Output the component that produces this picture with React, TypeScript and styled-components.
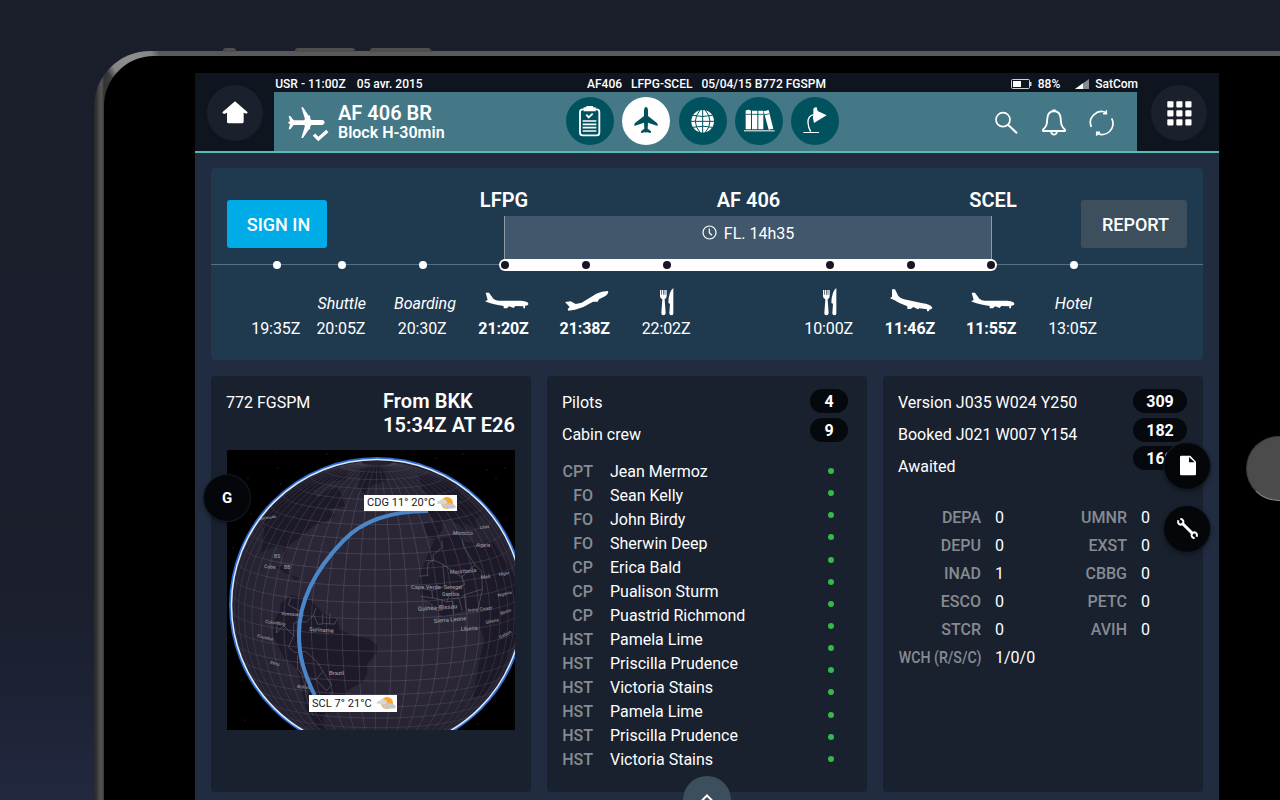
import React from "react";
import styled, { createGlobalStyle, css } from "styled-components";

const GlobalStyle = createGlobalStyle`
  * { box-sizing: border-box; }
  body { margin: 0; overflow: hidden; background: #1a1e2b; }
  h1, h2, p { margin: 0; font-weight: inherit; font-size: inherit; }
`;

/* ---------- device ---------- */

const Backdrop = styled.div`
  width: 1280px;
  height: 800px;
  overflow: hidden;
  position: relative;
  padding: 51px 0 0 94px;
  font-family: Roboto, "Liberation Sans", sans-serif;
  font-size: 16px;
  color: #fff;
  background: linear-gradient(180deg, #1a1e2b 0%, #1b1f2d 74%, #1c2133 84%, #22283f 100%);
`;

const Tablet = styled.div`
  position: relative;
  width: 1300px;
  height: 1000px;
  border-radius: 56px 0 0 0;
  padding: 5px 0 0 10px;
  background:
    radial-gradient(circle at 38px 8px, #8f8f8f 0, #858585 20px, transparent 28px),
    linear-gradient(90deg, #29292b 0, #343436 3px, #4a4a4a 5px, #525252 8px, #333 10px, #5a5a5a 40px);
`;

const Bezel = styled.div`
  width: 1290px;
  height: 995px;
  border-radius: 50px 0 0 0;
  padding: 17px 0 0 91px;
  background: #000;
`;

const SideButton = styled.i<{ $left: number; $width: number }>`
  position: absolute;
  top: -3px;
  left: ${(p) => p.$left}px;
  width: ${(p) => p.$width}px;
  height: 4px;
  border-radius: 3px 3px 0 0;
  background: #4e4e4f;
`;

const HomeKey = styled.i`
  position: absolute;
  left: 1152px;
  top: 385px;
  width: 65px;
  height: 65px;
  border-radius: 50%;
  background: #4b4b4b;
  border: 1.500px solid #3a3a3a;
  border-bottom-color: #8a8a8a;
`;

const Screen = styled.main`
  position: relative;
  width: 1024px;
  height: 728px;
  background: #212c40;
`;

/* ---------- header ---------- */

const Header = styled.header`
  height: 80px;
  display: grid;
  grid-template-columns: 79px 863px 82px;
  background: #0f151f;
  border-bottom: 2px solid #57bdb3;
`;

const Corner = styled.div<{ $shift?: number }>`
  display: flex;
  justify-content: center;
  padding: 12px 0 0 ${(p) => p.$shift ?? 0}px;
`;

const RoundButton = styled.button`
  width: 56px;
  height: 56px;
  padding: 0;
  border: 0;
  border-radius: 50%;
  background: #1b212c;
  display: grid;
  place-items: center;
`;

const StatusBar = styled.div`
  height: 19px;
  display: grid;
  grid-template-columns: 313px 1fr auto;
  align-items: center;
  padding-top: 3px;
  margin-right: -1px;
  font-size: 12px;
  font-weight: 500;
  line-height: 16px;
  white-space: pre;
`;

const StatusGroup = styled.div<{ $gap: number }>`
  display: flex;
  align-items: center;
  gap: ${(p) => p.$gap}px;
`;

const TitleBar = styled.div`
  height: 59px;
  display: grid;
  grid-template-columns: 292px 273px 1fr;
  background: #447887;
`;

const FlightTitle = styled.div`
  display: flex;
  padding: 14px 0 0 13px;
  gap: 9px;
`;

const FlightName = styled.h1`
  font-size: 20px;
  font-weight: 600;
  line-height: 20px;
  margin: -3px 0 1px;
`;

const FlightState = styled.p`
  font-size: 16px;
  font-weight: 600;
  line-height: 18px;
`;

const Nav = styled.nav`
  display: flex;
  justify-content: space-between;
  padding-top: 5px;
`;

const NavButton = styled.button<{ $active?: boolean }>`
  width: 48px;
  height: 48px;
  padding: 0;
  border: 0;
  border-radius: 50%;
  color: ${(p) => (p.$active ? "#00525f" : "#fff")};
  background: ${(p) => (p.$active ? "#fff" : "#00525f")};
  svg { display: block; }
`;

const Actions = styled.div`
  display: flex;
  justify-content: flex-end;
  align-items: center;
  gap: 23px;
  padding: 2px 23px 0 0;
  svg:first-child { margin-right: 1px; }
`;

/* ---------- flight timeline ---------- */

const Body = styled.div`
  padding: 15px 16px 0;
  display: flex;
  flex-direction: column;
  gap: 16px;
`;

const Timeline = styled.section`
  height: 192px;
  border-radius: 4px;
  background: #1f394f;
`;

const TimelineTop = styled.div`
  height: 92px;
  display: grid;
  grid-template-columns: 277px 488px 89px auto;
  padding-left: 16px;
`;

const ActionButton = styled.button<{ $tone: string; $width: number }>`
  width: ${(p) => p.$width}px;
  height: 48px;
  margin-top: 32px;
  padding: 1px 0 0 3px;
  border: 0;
  border-radius: 3px;
  color: #fff;
  background: ${(p) => p.$tone};
  font: 500 18px Roboto, sans-serif;
`;

const Leg = styled.div`
  padding-top: 20px;
`;

const LegLabels = styled.div`
  display: flex;
  justify-content: space-between;
  margin: 0 -41px 0 -40px;
  height: 28px;
  font-size: 20px;
  font-weight: 600;
  line-height: 24px;
  text-align: center;
  span { width: 80px; white-space: nowrap; }
  span:nth-child(2) { width: 81px; }
`;

const LegBox = styled.div`
  height: 44px;
  display: flex;
  justify-content: center;
  gap: 7px;
  padding-top: 8px;
  line-height: 20px;
  background: #41576b;
  border: solid #8e9ba7;
  border-width: 0 1px;
  svg { margin-top: 1px; }
`;

const Stops = styled.div`
  position: relative;
  display: flex;
  padding-left: 41px;
  &::before {
    content: "";
    position: absolute;
    left: 0;
    right: 0;
    top: 4px;
    height: 1px;
    background: #587086;
  }
  &::after {
    content: "";
    position: absolute;
    left: 288px;
    width: 498px;
    top: -1px;
    height: 12px;
    border-radius: 6px;
    background: #fff;
  }
`;

const Stop = styled.div<{ $narrow?: boolean; $strong?: boolean }>`
  width: ${(p) => (p.$narrow ? 49 : 81.3)}px;
  display: flex;
  flex-direction: column;
  align-items: center;
  font-weight: ${(p) => (p.$strong ? 700 : 400)};
`;

const Dot = styled.i<{ $dark?: boolean; $hidden?: boolean; $nudge?: number }>`
  position: relative;
  z-index: 1;
  width: 8px;
  height: 8px;
  margin: 1px ${(p) => -1 + 2 * (p.$nudge ?? 0)}px 0 0;
  border-radius: 50%;
  background: ${(p) => (p.$dark ? "#171526" : "#fff")};
  ${(p) => p.$hidden && css`visibility: hidden;`}
`;

const StopCaption = styled.div<{ $shift?: number }>`
  height: 32px;
  margin-top: 18px;
  padding: 1px 0 0 ${(p) => 2 * (p.$shift ?? 0)}px;
  display: grid;
  place-items: center;
  font-style: italic;
  svg { margin-bottom: 6px; }
`;

const StopTime = styled.time`
  margin: 0 1.500px 0 0;
  line-height: 20px;
  letter-spacing: -0.1px;
`;

/* ---------- cards ---------- */

const Cards = styled.div`
  display: grid;
  grid-template-columns: repeat(3, 320px);
  gap: 16px;
`;

const Card = styled.section`
  height: 416px;
  border-radius: 4px;
  background: #19212f;
`;

const AircraftHead = styled.div`
  height: 74px;
  display: flex;
  justify-content: space-between;
  padding: 13px 16px 0 15px;
  p { line-height: 27px; }
  h2 { font-size: 20px; font-weight: 600; line-height: 24px; letter-spacing: 0.05px; }
`;

const Globe = styled.div`
  position: relative;
  width: 288px;
  height: 280px;
  margin-left: 16px;
  overflow: hidden;
  background: #000;
  > svg { display: block; }
`;

const CityTag = styled.div<{ $x: number; $y: number; $w: number; $h: number }>`
  position: absolute;
  left: ${(p) => p.$x}px;
  top: ${(p) => p.$y}px;
  width: ${(p) => p.$w}px;
  height: ${(p) => p.$h}px;
  display: flex;
  align-items: center;
  justify-content: space-between;
  padding: 0 1px 0 3px;
  background: #fff;
  color: #16161c;
  font-size: 11px;
  letter-spacing: 0.06px;
  line-height: 16px;
  white-space: nowrap;
  svg { margin-bottom: 1px; }
`;

const SummaryHead = styled.div`
  height: 82px;
  display: flex;
  justify-content: space-between;
  padding: 11px 16px 0 15px;
`;

const SummaryLines = styled.div`
  line-height: 32px;
`;

const Pills = styled.div<{ $right: number }>`
  display: flex;
  flex-direction: column;
  gap: 4.6px;
  margin: 2px ${(p) => p.$right}px 0 0;
`;

const Pill = styled.span<{ $width: number }>`
  width: ${(p) => p.$width}px;
  height: 24px;
  border-radius: 12px;
  background: #05080c;
  text-align: center;
  font-weight: 700;
  line-height: 25px;
`;

const Roster = styled.div`
  display: grid;
  grid-template-columns: 31px 1fr 6px;
  column-gap: 17px;
  padding: 2px 33px 0 15px;
`;

const RoleColumn = styled.div`
  display: flex;
  flex-direction: column;
  align-items: flex-end;
  color: #868b92;
  font-weight: 500;
  line-height: 24px;
`;

const NameColumn = styled.div`
  line-height: 24px;
`;

const PresenceColumn = styled.div`
  display: flex;
  flex-direction: column;
  justify-content: space-between;
  padding: 8px 0 10px;
  i { width: 6px; height: 6px; border-radius: 50%; background: #35b94a; }
`;

const Counters = styled.dl`
  margin: 0;
  padding: 46px 0 0 0;
  display: grid;
  grid-template-columns: 98px 48px 98px 48px;
  line-height: 28px;
  dd { margin: 0; padding-left: 14px; white-space: nowrap; }
`;

const CounterLabel = styled.dt<{ $condensed: boolean }>`
  justify-self: end;
  color: #868b92;
  font-weight: 500;
  white-space: nowrap;
  transform-origin: right center;
  ${(p) => p.$condensed && css`transform: scaleX(0.885);`}
`;

const Floating = styled.button<{ $x: number; $y: number }>`
  position: absolute;
  left: ${(p) => p.$x}px;
  top: ${(p) => p.$y}px;
  width: 46px;
  height: 46px;
  padding: 0 0 1px;
  border: 0;
  border-radius: 50%;
  display: grid;
  place-items: center;
  color: #fff;
  background: #04060a;
  box-shadow: 0 0 0 1px #131c28, 0 2px 5px rgba(0, 0, 0, 0.5);
  font: 700 15px Roboto, sans-serif;
`;

const Drawer = styled.button`
  position: absolute;
  left: 488px;
  top: 703px;
  width: 48px;
  height: 48px;
  padding: 17px 1px 0 0;
  border: 0;
  border-radius: 50%;
  background: #3b4f5d;
  display: flex;
  justify-content: center;
`;

/* ---------- icons ---------- */

const HomeIcon = () => (
  <svg width="26" height="24" viewBox="0 0 78 72" fill="#fff">
    <path d="M39 1 L77 34 Q75 40 69 37 L65 35 V62 Q65 67 60 67 H20 Q15 67 15 62 V35 L9 38 Q3 40 1 34 Z" />
  </svg>
);

const AppsIcon = () => (
  <svg width="25" height="25" viewBox="0 0 25 25" fill="#fff">
    {[0, 9, 18].map((y) => [0, 9, 18].map((x) => <rect key={`${x}-${y}`} x={x + 0.3} y={y + 0.2} width="6.2" height="6.2" rx="0.8" />))}
  </svg>
);

const PlaneCheckIcon = () => (
  <svg width="42" height="36" viewBox="0 0 126 108" fill="#fff">
    <path d="M5 30 H10 L20 43 H50 L54 40 L43 4 H48 L64 28 Q72 29 69 36 L73 42 H106 Q113 43 113 49 Q113 56 106 57 H73 L69 64 Q72 70 65 71 L48 96 H43 L54 59 L50 57 H20 L10 70 H5 L9 54 L4 52 V48 L9 46 Z" />
    <path d="M81 86 L94 99 L121 75" fill="none" stroke="#fff" strokeWidth="10" />
  </svg>
);

const ClipboardIcon = () => (
  <svg width="48" height="48" viewBox="0 0 144 144" fill="none" stroke="currentColor" strokeWidth="5.500">
    <rect x="42" y="37" width="58" height="78" rx="8" />
    <path d="M53 43 V31 H61 V27 H81 V31 H89 V43 Z" fill="currentColor" stroke="none" />
    <path d="M61 53 L68 61 L80 50" />
    <path d="M50 72 H91 M50 82 H91 M50 92 H91 M50 102 H91" strokeWidth="5" />
  </svg>
);

const PlaneIcon = () => (
  <svg width="48" height="48" viewBox="0 0 144 144" fill="currentColor">
    <path d="M72 30 Q78 31 78 42 V57 L104 77 Q108 80 107 87 L78 77 L77 95 L87 103 Q89 108 84 108 L74 105 L72 109 L70 105 L60 108 Q55 108 57 103 L67 95 L66 77 L37 87 Q36 80 40 77 L66 57 V42 Q66 31 72 30 Z" />
  </svg>
);

const GlobeIcon = () => (
  <svg width="48" height="48" viewBox="0 0 144 144" fill="none" stroke="#00525f" strokeWidth="3">
    <circle cx="71" cy="73" r="34" fill="#fff" stroke="none" />
    <path d="M71 38 V108 M36 73 H106 M42 55 Q71 62 100 55 M42 91 Q71 84 100 91" />
    <path d="M64 38 Q34 73 64 108 M78 38 Q108 73 78 108" />
  </svg>
);

const BooksIcon = () => (
  <svg width="48" height="48" viewBox="0 0 144 144" fill="currentColor">
    <path d="M32 41 Q40 36 48 41 V97 H32 Z M51 41 H67 V97 H51 Z M70 41 H85 V97 H70 Z" />
    <path d="M86 43 L101 39 L115 95 L101 98 Z" />
    <path d="M27 101.500 H119" stroke="currentColor" strokeWidth="3" />
    <path d="M32 52 H85 M87 54 L103 50" stroke="#00525f" strokeWidth="2.500" />
  </svg>
);

const LampIcon = () => (
  <svg width="48" height="48" viewBox="0 0 144 144" fill="currentColor">
    <path d="M67 35 Q71 29 77 31 L80 42 L107 55 L69 78 Q64 60 67 47 Z" />
    <path d="M67 53 Q50 58 51 77 Q52 92 59 104" fill="none" stroke="currentColor" strokeWidth="4" />
    <path d="M37 106.500 H84" stroke="currentColor" strokeWidth="3" />
  </svg>
);

const SearchIcon = () => (
  <svg width="24" height="24" viewBox="0 0 72 72" fill="none" stroke="#fff" strokeWidth="5">
    <circle cx="27" cy="26" r="21" />
    <path d="M42 41 L69 67" strokeWidth="6" />
  </svg>
);

const BellIcon = () => (
  <svg width="24" height="27" viewBox="0 0 72 81" fill="none" stroke="#fff" strokeWidth="5.500" strokeLinejoin="round">
    <path d="M36 6 C23 7 17 15 16 28 C15 46 14 52 3 62 V66 H69 V62 C58 52 57 46 56 28 C55 15 49 7 36 6 Z" />
    <path d="M31 4 H41 M27 68 Q29 77 36 77 Q43 77 45 68" />
  </svg>
);

const SyncIcon = () => (
  <svg width="25" height="26" viewBox="0 0 75 78" fill="none" stroke="#fff" strokeWidth="5">
    <path d="M7 51 A33 33 0 0 1 53 9 M68 25 A33 33 0 0 1 22 69" />
    <path d="M52 1 V11 H42 M23 77 V67 H33" strokeWidth="4.500" />
  </svg>
);

const BatteryIcon = () => (
  <svg width="21" height="10" viewBox="0 0 21 10">
    <rect x="0.500" y="0.500" width="18" height="9" rx="1" fill="none" stroke="#cfd2d6" />
    <rect x="2" y="2" width="8" height="6" fill="#fff" />
    <rect x="19" y="3" width="1.500" height="4" fill="#cfd2d6" />
  </svg>
);

const SignalIcon = () => (
  <svg width="14" height="10" viewBox="0 0 14 10">
    <path d="M0 10 L14 0 V10 Z" fill="#888c92" />
    <path d="M0 10 L8 4.300 V10 Z" fill="#fff" />
  </svg>
);

const ClockIcon = () => (
  <svg width="15" height="15" viewBox="0 0 15 15" fill="none" stroke="#fff" strokeWidth="1.200">
    <circle cx="7.500" cy="7.500" r="6.500" />
    <path d="M7.300 3.500 V7.700 L10 10.300" />
  </svg>
);

const TaxiIcon = () => (
  <svg width="44" height="17" viewBox="0 0 132 51" fill="#fff">
    <path d="M2 2 H12 L25 20 Q32 26 42 26 H108 Q120 26 127 31 Q133 36 127 40 L120 42 V49 H115 V43 L91 42 L86 48 L72 43 L66 49 H56 V42 Q28 38 14 33 L0 28 L8 24 Z" />
  </svg>
);

const TakeoffIcon = () => (
  <svg width="44" height="21" viewBox="0 0 132 63" fill="#fff">
    <path d="M0 36 L17 34 L32 42 L50 38 L94 11 Q111 3 128 3 Q134 8 120 19 L102 28 L98 35 H84 Q58 52 30 59 L10 62 L8 57 L14 51 Z" />
  </svg>
);

const LandingIcon = () => (
  <svg width="43" height="23" viewBox="0 0 129 69" fill="#fff">
    <path d="M6 1 H15 L25 21 Q31 28 42 31 L98 43 Q120 46 126 54 Q129 61 118 62 L116 67 H111 V61 L88 58 L84 61 L70 54 L62 60 H52 V52 Q24 41 14 34 L0 28 L6 23 Z" />
  </svg>
);

const MealIcon = () => (
  <svg width="14" height="28" viewBox="0 0 42 84" fill="#fff">
    <path d="M0 6 H4 V20 H6 V6 H9 V20 H11 V6 H14 V20 H16 V6 H20 V24 Q20 31 14 34 L17 76 Q16 82 10 82 Q4 82 4 76 L7 34 Q0 31 0 24 Z" />
    <path d="M40 0 V77 Q39 82 34 82 Q28 82 28 76 L30 47 L25 45 Q26 10 40 0 Z" />
  </svg>
);

const WeatherIcon = () => (
  <svg width="20" height="14" viewBox="0 0 20 14">
    <circle cx="11" cy="7" r="6" fill="#f9a72b" />
    <path d="M0.500 7.500 Q0.500 5 4 4.500 Q6 1.500 9 3.500 Q12 5 10.500 8 Q7 9.500 4 8 Z" fill="#d6d6d8" />
    <path d="M5.500 10 Q7 8 10 8.500 Q12 6 15 7.500 Q19 8 20 11 Q19 13 15 12.500 Q9 13 5.500 10 Z" fill="#c6c7ca" />
  </svg>
);

const DocumentIcon = () => (
  <svg width="19" height="21" viewBox="-4 0 57 63" fill="#fff">
    <path fillRule="evenodd" d="M6 2 H33 L50 20 V57 Q50 61 46 61 H6 Q2 61 2 57 V6 Q2 2 6 2 Z M29 6 V22 H46 Z" />
  </svg>
);

const WrenchIcon = () => (
  <svg width="21" height="21" viewBox="0 0 63 63" fill="none" stroke="#fff">
    <path d="M15 15 L48 48" strokeWidth="9" />
    <path d="M4 7 Q1 18 11 20 Q20 19 19 10 Q17 3 10 2 M59 56 Q62 45 52 43 Q43 44 44 53 Q46 60 53 61" strokeWidth="6" />
  </svg>
);

const ChevronUp = () => (
  <svg width="12" height="8" viewBox="0 0 12 8" fill="none" stroke="#fff" strokeWidth="2">
    <path d="M1 7.500 L6 2.500 L11 7.500" />
  </svg>
);

/* ---------- globe map ---------- */

const RADIUS = 145.5;
const CX = 150;
const CY = 155;
const LAT0 = (10 * Math.PI) / 180;
const LON0 = -35;

type LonLat = [number, number];

const project = ([lon, lat]: LonLat) => {
  const l = ((lon - LON0) * Math.PI) / 180;
  const f = (lat * Math.PI) / 180;
  let x = Math.cos(f) * Math.sin(l);
  let y = Math.cos(LAT0) * Math.sin(f) - Math.sin(LAT0) * Math.cos(f) * Math.cos(l);
  const visible = Math.sin(LAT0) * Math.sin(f) + Math.cos(LAT0) * Math.cos(f) * Math.cos(l) >= 0;
  if (!visible) {
    const d = Math.hypot(x, y) || 1;
    x /= d;
    y /= d;
  }
  return { x: CX + x * RADIUS, y: CY - y * RADIUS, visible };
};

const linePath = (points: LonLat[]) => {
  let pen = false;
  return points
    .map((pt) => {
      const { x, y, visible } = project(pt);
      const part = visible ? `${pen ? "L" : "M"}${x.toFixed(1)} ${y.toFixed(1)}` : "";
      pen = visible;
      return part;
    })
    .join("");
};

const areaPath = (points: LonLat[]) =>
  points.map((pt, i) => { const { x, y } = project(pt); return `${i ? "L" : "M"}${x.toFixed(1)} ${y.toFixed(1)}`; }).join("") + "Z";

const STEP = 6.5;
const meridians = Array.from({ length: 28 }, (_, i) => LON0 - 0.8 + (i - 14) * STEP).map((lon) =>
  linePath(Array.from({ length: 57 }, (_, k): LonLat => [lon, -84 + k * 3])),
);
const parallels = Array.from({ length: 26 }, (_, i) => -80 + i * STEP).map((lat) =>
  linePath(Array.from({ length: 62 }, (_, k): LonLat => [LON0 - 92 + k * 3, lat])),
);

const LAND: LonLat[][] = [
  [[-77, 8], [-72, 12], [-62, 10.5], [-57, 6], [-51, 4], [-50, 0], [-44, -2.5], [-39, -3], [-35, -6], [-35, -9], [-39, -14], [-39, -18], [-41, -22], [-48, -26], [-49, -29], [-53, -34], [-58, -35], [-57, -38], [-62, -39], [-65, -42], [-67, -46], [-69, -52], [-74, -50], [-73, -38], [-71, -30], [-70, -18], [-76, -14], [-81, -5], [-80, 1], [-77, 5]],
  [[-6, 35.5], [0, 36], [10, 37], [11, 33], [20, 31], [32, 31], [42, 14], [51, 12], [42, 0], [40, -12], [35, -24], [27, -34], [18, -34], [12, -17], [13, -7], [9, 0], [9, 4], [4, 6], [-3, 5], [-8, 4.5], [-13, 8.5], [-17, 14], [-17, 21], [-13, 27], [-10, 31]],
  [[-9, 43], [-9, 37], [-5, 36], [0, 39], [3, 43], [9, 44], [15, 38], [18, 41], [24, 37], [28, 41], [40, 42], [50, 60], [40, 68], [25, 71], [12, 66], [5, 61], [8, 57], [9, 54], [2, 51], [-4, 48], [-1, 44]],
  [[-5, 50], [1, 51], [0, 54], [-3, 58], [-6, 57], [-3, 54]],
  [[-45, 60], [-40, 65], [-24, 69], [-20, 76], [-25, 83], [-50, 82], [-70, 78], [-55, 70], [-52, 64]],
  [[-97, 26], [-90, 30], [-83, 30], [-80, 25], [-81, 31], [-75, 36], [-70, 42], [-64, 44], [-60, 47], [-66, 50], [-56, 52], [-62, 58], [-70, 62], [-78, 60], [-80, 55], [-92, 58], [-85, 66], [-70, 68], [-85, 75], [-120, 74], [-140, 60], [-130, 40]],
  [[-84, 22], [-77, 20], [-74, 20], [-79, 23]],
  [[-74, 19.5], [-69, 19], [-71, 18]],
];

const BORDERS: LonLat[][] = [
  [[-72, 11], [-73, 8], [-67, 6], [-67, 2], [-70, 1], [-70, -4], [-75, -0.5], [-79, -4], [-78, 1]],
  [[-67, 2], [-64, 2], [-61, 5], [-60, 8]],
  [[-61, 5], [-59, 1.5], [-56, 2], [-52, 2], [-51, 4]],
  [[-57, 6], [-57, 2]], [[-54, 6], [-54, 2]],
  [[-70, -4], [-73, -9], [-70, -11], [-65, -10], [-60, -14], [-58, -18], [-62, -22], [-67, -22], [-70, -18], [-69, -12]],
  [[-58, -18], [-55, -24], [-58, -27], [-62, -22]], [[-55, -27], [-57, -30], [-53, -33]],
  [[-67, -22], [-69, -28], [-70, -34], [-71, -42]],
  [[-13, 27], [-9, 27], [-9, 29], [-3, 32], [-2, 35]],
  [[-17, 21], [-13, 21], [-13, 23], [-12, 26], [-9, 27], [-5, 25], [-6, 16], [-12, 15], [-16, 16]],
  [[-5, 25], [3, 19], [4, 16], [0, 15], [-4, 13], [-6, 10], [-8, 11], [-12, 12], [-12, 15]],
  [[-8, 11], [-8, 7], [-11, 7], [-13, 9]], [[-6, 10], [-3, 10], [-3, 5]], [[-3, 11], [0, 11], [1, 6]], [[1, 11], [3, 12], [3, 6]], [[-17, 13], [-12, 12]], [[-15, 11], [-12, 9]],
  [[3, 19], [12, 23], [9, 31], [10, 34]], [[3, 12], [13, 13], [9, 5]], [[12, 23], [15, 20], [13, 13]],
];

const PLACES: [string, number, number, number, number][] = [
  ["Morocco", 226, 85, 5, 0], ["Algeria", 249, 97, 4.5, 0], ["Libya", 253, 79, 4, -8], ["Mauritania", 223, 124, 5.5, -4],
  ["Mali", 254, 129, 5, -6], ["Niger", 272, 126, 4.5, -10], ["Cape Verde", 184, 139, 5.8, 0], ["Senegal", 217, 139, 5, 0],
  ["Gambia", 215, 146, 5, 0], ["Guinea-Bissau", 191, 161, 6.1, -4], ["Sierra Leone", 207, 173, 5.8, -5],
  ["Liberia", 234, 181, 5.5, -4], ["Ivory Coast", 241, 162, 4.8, -6], ["Ghana", 259, 174, 4.6, -12], ["Nigeria", 271, 147, 4.4, -14],
  ["Benin", 274, 165, 4.4, -20], ["Gabon", 273, 189, 4.6, -28],
  ["Venezuela", 54, 165, 4.8, 4], ["Colombia", 38, 173, 4.8, 8], ["Suriname", 82, 181, 5.8, 4], ["Ecuador", 30, 187, 4.5, 14],
  ["Peru", 43, 214, 4.6, 12], ["Brazil", 102, 225, 6, 0], ["Bolivia", 70, 238, 4.8, 6], ["Cuba", 37, 118, 5, 4],
  ["BS", 47, 108, 5, 0], ["BB", 57, 119, 5, 0], ["Bermuda", 33, 70, 4, -8],
];

const STARS: [number, number][] = Array.from({ length: 90 }, (_, i): [number, number] => [(i * 97) % 288, (i * i * 31 + i * 17) % 280]);

const WorldMap = () => (
  <svg width="288" height="280" viewBox="0 0 288 280">
    <defs>
      <clipPath id="sphere"><circle cx={CX} cy={CY} r={RADIUS} /></clipPath>
      <radialGradient id="shade">
        <stop offset="0.7" stopColor="#15131f" stopOpacity="0" />
        <stop offset="1" stopColor="#15131f" stopOpacity="0.35" />
      </radialGradient>
    </defs>
    {STARS.map(([x, y], i) => <circle key={i} cx={x} cy={y} r="0.5" fill="#4a4a4c" />)}
    <circle cx={CX} cy={CY} r="146.7" fill="#2b2737" stroke="#2f6bd0" strokeWidth="2.4" />
    <g clipPath="url(#sphere)">
      {LAND.map((area, i) => <path key={i} d={areaPath(area)} fill="#1e1a29" />)}
      <g fill="none" stroke="#8b889c" strokeOpacity="0.42" strokeWidth="0.6">
        {[...meridians, ...parallels].map((d, i) => <path key={i} d={d} />)}
      </g>
      <g fill="none" stroke="#77757f" strokeOpacity="0.7" strokeWidth="0.7">
        {BORDERS.map((b, i) => <path key={i} d={linePath(b)} />)}
      </g>
      <circle cx={CX} cy={CY} r={RADIUS} fill="url(#shade)" />
      <g fill="#93919b" fontFamily="Roboto, sans-serif" fontWeight="500">
        {PLACES.map(([name, x, y, size, turn]) => (
          <text key={name} fontSize={size} transform={`translate(${x} ${y}) rotate(${turn})`}>{name}</text>
        ))}
      </g>
    </g>
    <circle cx={CX} cy={CY} r="145.5" fill="none" stroke="#d9ecff" strokeWidth="1.5" />
    <path d="M201 61 C163 61 134 72 116 91 C91 117 72 148 72 184 C72 207 77 223 88 246" fill="none" stroke="#4a86c8" strokeWidth="4" />
  </svg>
);

/* ---------- data ---------- */

type StopData = {
  time?: string;
  caption?: React.ReactNode;
  shift?: number;
  nudge?: number;
  strong?: boolean;
  inFlight?: boolean;
};

const STOPS: StopData[] = [
  { time: "19:35Z" },
  { time: "20:05Z", caption: "Shuttle" },
  { time: "20:30Z", caption: "Boarding", shift: 2 },
  { time: "21:20Z", caption: <TaxiIcon />, shift: 3, strong: true, inFlight: true },
  { time: "21:38Z", caption: <TakeoffIcon />, shift: 1, strong: true, inFlight: true },
  { time: "22:02Z", caption: <MealIcon />, inFlight: true },
  {},
  { time: "10:00Z", caption: <MealIcon />, shift: 1, inFlight: true },
  { time: "11:46Z", caption: <LandingIcon />, shift: 0.5, strong: true, inFlight: true },
  { time: "11:55Z", caption: <TaxiIcon />, shift: 1, nudge: 1.5, strong: true, inFlight: true },
  { time: "13:05Z", caption: "Hotel" },
];

const CREW: [string, string][] = [
  ["CPT", "Jean Mermoz"], ["FO", "Sean Kelly"], ["FO", "John Birdy"], ["FO", "Sherwin Deep"], ["CP", "Erica Bald"],
  ["CP", "Pualison Sturm"], ["CP", "Puastrid Richmond"], ["HST", "Pamela Lime"], ["HST", "Priscilla Prudence"],
  ["HST", "Victoria Stains"], ["HST", "Pamela Lime"], ["HST", "Priscilla Prudence"], ["HST", "Victoria Stains"],
];

const COUNTERS: [string, string][] = [
  ["DEPA", "0"], ["UMNR", "0"], ["DEPU", "0"], ["EXST", "0"], ["INAD", "1"], ["CBBG", "0"],
  ["ESCO", "0"], ["PETC", "0"], ["STCR", "0"], ["AVIH", "0"], ["WCH (R/S/C)", "1/0/0"],
];

export default function App() {
  return (
    <Backdrop>
      <GlobalStyle />
      <Tablet>
        <SideButton $left={129} $width={13} />
        <SideButton $left={201} $width={60} />
        <SideButton $left={276} $width={61} />
        <Bezel>
          <Screen>
            <Header>
              <Corner><RoundButton><HomeIcon /></RoundButton></Corner>
              <div>
                <StatusBar>
                  <StatusGroup $gap={11}><span>&#8202;USR - 11:00Z</span><span>05 avr. 2015</span></StatusGroup>
                  <StatusGroup $gap={9}><span>AF406</span><span>LFPG-SCEL</span><span>05/04/15 B772 FGSPM</span></StatusGroup>
                  <StatusGroup $gap={6}><BatteryIcon /><span>88%   </span><SignalIcon /><span>SatCom</span></StatusGroup>
                </StatusBar>
                <TitleBar>
                  <FlightTitle>
                    <PlaneCheckIcon />
                    <div>
                      <FlightName>AF 406 BR</FlightName>
                      <FlightState>Block H-30min</FlightState>
                    </div>
                  </FlightTitle>
                  <Nav>
                    <NavButton><ClipboardIcon /></NavButton>
                    <NavButton $active><PlaneIcon /></NavButton>
                    <NavButton><GlobeIcon /></NavButton>
                    <NavButton><BooksIcon /></NavButton>
                    <NavButton><LampIcon /></NavButton>
                  </Nav>
                  <Actions><SearchIcon /><BellIcon /><SyncIcon /></Actions>
                </TitleBar>
              </div>
              <Corner $shift={2}><RoundButton><AppsIcon /></RoundButton></Corner>
            </Header>

            <Body>
              <Timeline>
                <TimelineTop>
                  <ActionButton $tone="#00ace8" $width={100}>SIGN IN</ActionButton>
                  <Leg>
                    <LegLabels><span>LFPG</span><span>AF 406</span><span>SCEL</span></LegLabels>
                    <LegBox><ClockIcon />FL. 14h35</LegBox>
                  </Leg>
                  <span />
                  <ActionButton $tone="#3d4f5c" $width={106}>REPORT</ActionButton>
                </TimelineTop>
                <Stops>
                  {STOPS.map((s, i) => (
                    <Stop key={i} $narrow={i === 0} $strong={s.strong}>
                      <Dot $dark={s.inFlight} $hidden={!s.time} $nudge={s.nudge} />
                      <StopCaption $shift={s.shift}>{s.caption}</StopCaption>
                      <StopTime>{s.time}</StopTime>
                    </Stop>
                  ))}
                </Stops>
              </Timeline>

              <Cards>
                <Card>
                  <AircraftHead>
                    <p>772 FGSPM</p>
                    <h2>From BKK<br />15:34Z AT E26</h2>
                  </AircraftHead>
                  <Globe>
                    <WorldMap />
                    <CityTag $x={137} $y={45} $w={93} $h={16}>CDG 11° 20°C <WeatherIcon /></CityTag>
                    <CityTag $x={82} $y={245} $w={88} $h={17}>SCL 7° 21°C <WeatherIcon /></CityTag>
                  </Globe>
                </Card>

                <Card>
                  <SummaryHead>
                    <SummaryLines>Pilots<br />Cabin crew</SummaryLines>
                    <Pills $right={3}><Pill $width={38}>4</Pill><Pill $width={38}>9</Pill></Pills>
                  </SummaryHead>
                  <Roster>
                    <RoleColumn>{CREW.map(([role], i) => <span key={i}>{role}</span>)}</RoleColumn>
                    <NameColumn>{CREW.map(([, name], i) => <div key={i}>{name}</div>)}</NameColumn>
                    <PresenceColumn>{Array.from({ length: 14 }, (_, i) => <i key={i} />)}</PresenceColumn>
                  </Roster>
                </Card>

                <Card>
                  <SummaryHead>
                    <SummaryLines>Version J035 W024 Y250<br />Booked J021 W007 Y154<br />Awaited</SummaryLines>
                    <Pills $right={0}><Pill $width={54}>309</Pill><Pill $width={54}>182</Pill><Pill $width={54}>169</Pill></Pills>
                  </SummaryHead>
                  <Counters>
                    {COUNTERS.map(([k, v]) => (
                      <React.Fragment key={k}>
                        <CounterLabel $condensed={k.length > 4}>{k}</CounterLabel>
                        <dd>{v}</dd>
                      </React.Fragment>
                    ))}
                  </Counters>
                </Card>
              </Cards>
            </Body>

            <Floating $x={9} $y={402}>G</Floating>
            <Floating $x={969} $y={370}><DocumentIcon /></Floating>
            <Floating $x={969} $y={433}><WrenchIcon /></Floating>
            <Drawer><ChevronUp /></Drawer>
          </Screen>
        </Bezel>
        <HomeKey />
      </Tablet>
    </Backdrop>
  );
}
